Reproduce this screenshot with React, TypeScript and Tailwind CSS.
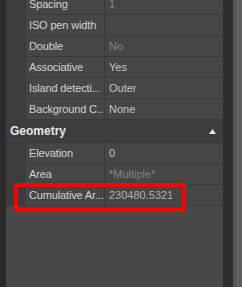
const topRows = [
  { label: "Spacing", value: "1", tone: "text-[#858585]" },
  { label: "ISO pen width", value: "", tone: "text-[#858585]" },
  { label: "Double", value: "No", tone: "text-[#858585]" },
  { label: "Associative", value: "Yes", tone: "text-[#c4c4c4]" },
  { label: "Island detecti...", value: "Outer", tone: "text-[#c4c4c4]" },
  { label: "Background C...", value: "None", tone: "text-[#c4c4c4]" },
];

const geoRows = [
  { label: "Elevation", value: "0", tone: "text-[#c4c4c4]" },
  { label: "Area", value: "*Multiple*", tone: "text-[#858585]" },
  { label: "Cumulative Ar...", value: "230480.5321", tone: "text-[#b0b0b0]" },
];

function Row({ label, value, tone }: { label: string; value: string; tone: string }) {
  return (
    <div className="flex h-[21px] bg-[#3c3c3c]">
      <div className="w-[20px] shrink-0" />
      <div className="flex flex-1 border-b border-[#393939] bg-[#464646]">
        <div className="w-[79px] shrink-0 border-r border-[#393939] pl-[3px] leading-[20px] tracking-[-0.15px] text-[#d2d2d2] whitespace-nowrap overflow-hidden">
          {label}
        </div>
        <div className={`flex-1 pl-[4px] leading-[20px] whitespace-nowrap ${tone}`}>
          {value}
        </div>
      </div>
    </div>
  );
}

export default function App() {
  return (
    <div
      className="relative flex w-[242px] h-[287px] overflow-hidden bg-[#2d2d2d] text-[11px]"
      style={{ fontFamily: '"Liberation Sans", Arial, sans-serif' }}
    >
      <div className="w-[6px] shrink-0 bg-[#2b2b2b]" />
      <div className="w-[217px] shrink-0 flex flex-col bg-[#484848]">
        <div className="mt-[-6px]">
          {topRows.map((r) => (
            <Row key={r.label} {...r} />
          ))}
        </div>
        <div className="flex items-center justify-between h-[23px] pl-[4px] pr-[7px] bg-[#3d3d3d] border-b border-[#363636]">
          <span className="font-bold text-[12px] text-[#e6e6e6]">Geometry</span>
          <svg width="7" height="5" viewBox="0 0 7 5">
            <path d="M3.5 0 L7 5 L0 5 Z" fill="#e8e8e8" />
          </svg>
        </div>
        <div>
          {geoRows.map((r) => (
            <Row key={r.label} {...r} />
          ))}
        </div>
        <div className="flex-1 bg-[#484848]" />
      </div>
      <div className="w-[10px] shrink-0 bg-[#2e2e2e]" />
      <div className="flex-1 flex">
        <div className="w-[4px] bg-[#555555]" />
        <div className="w-[1px] bg-[#6a6a6a]" />
        <div className="flex-1 bg-[#5e5e5e]" />
      </div>
      <div className="absolute left-[14px] top-[183px] w-[172px] h-[29px] border-[4px] border-[#ff0000] rounded-[2px]" />
    </div>
  );
}
